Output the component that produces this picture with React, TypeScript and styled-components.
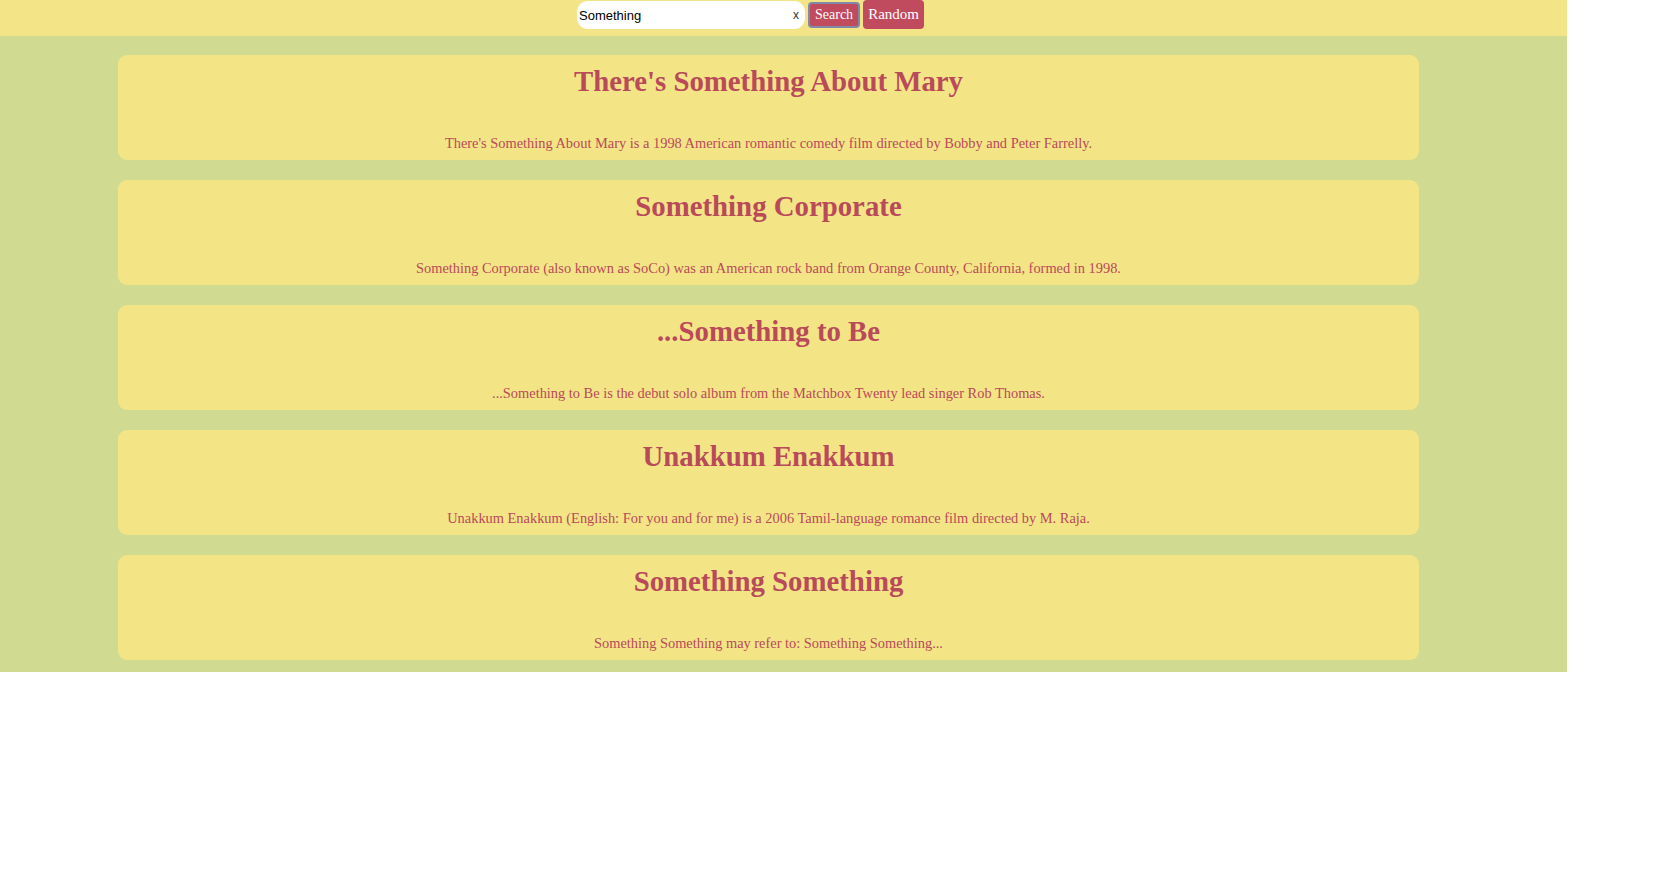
import React from "react";
import styled, { createGlobalStyle } from "styled-components";

const Global = createGlobalStyle`
  html, body { margin: 0; padding: 0; background: #ffffff; }
  body { font-family: "Liberation Serif", "Times New Roman", serif; }
`;

const Page = styled.div`
  width: 1567px;
  background: #d0db91;
  padding-bottom: 12px;
`;

const Header = styled.header`
  height: 36px;
  background: #f3e488;
  display: flex;
  justify-content: center;
  align-items: flex-start;
  gap: 3px;
  padding-right: 66px;
  box-sizing: border-box;
`;

const SearchBox = styled.div`
  width: 228px;
  height: 28px;
  margin-top: 1px;
  background: #ffffff;
  border-radius: 11px;
  display: flex;
  align-items: center;
  padding: 0 6px 0 2px;
  box-sizing: border-box;
`;

const SearchInput = styled.input`
  flex: 1;
  border: none;
  outline: none;
  background: transparent;
  font-family: "Liberation Sans", Arial, sans-serif;
  font-size: 13px;
  color: #000;
  padding: 0;
  min-width: 0;
`;

const Clear = styled.span`
  font-family: "Liberation Sans", Arial, sans-serif;
  font-size: 12px;
  color: #333;
`;

const Button = styled.button<{ $outlined?: boolean }>`
  background: #c04a5e;
  color: #ffffff;
  font-family: "Liberation Serif", "Times New Roman", serif;
  font-size: ${(p) => (p.$outlined ? "14px" : "15px")};
  border: ${(p) => (p.$outlined ? "2px solid #7f8aa6" : "none")};
  border-radius: 4px;
  height: ${(p) => (p.$outlined ? "26px" : "29px")};
  margin-top: ${(p) => (p.$outlined ? "2px" : "0")};
  padding: ${(p) => (p.$outlined ? "0 5px" : "0 5px")};
  cursor: pointer;
`;

const List = styled.main`
  display: flex;
  flex-direction: column;
  gap: 20px;
  padding: 19px 0 0 118px;
`;

const Card = styled.article`
  width: 1301px;
  height: 105px;
  box-sizing: border-box;
  background: #f3e486;
  border-radius: 9px;
  color: #b94a5a;
  text-align: center;
  display: flex;
  flex-direction: column;
  align-items: center;
  padding-top: 8px;
`;

const Title = styled.h2`
  margin: 0;
  font-size: 28.8px;
  font-weight: bold;
  line-height: 36px;
`;

const Extract = styled.p`
  margin: 35px 0 0;
  font-size: 14.4px;
  line-height: 18px;
`;

const results = [
  {
    title: "There's Something About Mary",
    text: "There's Something About Mary is a 1998 American romantic comedy film directed by Bobby and Peter Farrelly.",
  },
  {
    title: "Something Corporate",
    text: "Something Corporate (also known as SoCo) was an American rock band from Orange County, California, formed in 1998.",
  },
  {
    title: "...Something to Be",
    text: "...Something to Be is the debut solo album from the Matchbox Twenty lead singer Rob Thomas.",
  },
  {
    title: "Unakkum Enakkum",
    text: "Unakkum Enakkum (English: For you and for me) is a 2006 Tamil-language romance film directed by M. Raja.",
  },
  {
    title: "Something Something",
    text: "Something Something may refer to: Something Something...",
  },
];

export default function App() {
  return (
    <>
      <Global />
      <Page>
        <Header>
          <SearchBox>
            <SearchInput defaultValue="Something" />
            <Clear>x</Clear>
          </SearchBox>
          <Button $outlined>Search</Button>
          <Button>Random</Button>
        </Header>
        <List>
          {results.map((r) => (
            <Card key={r.title}>
              <Title>{r.title}</Title>
              <Extract>{r.text}</Extract>
            </Card>
          ))}
        </List>
      </Page>
    </>
  );
}
